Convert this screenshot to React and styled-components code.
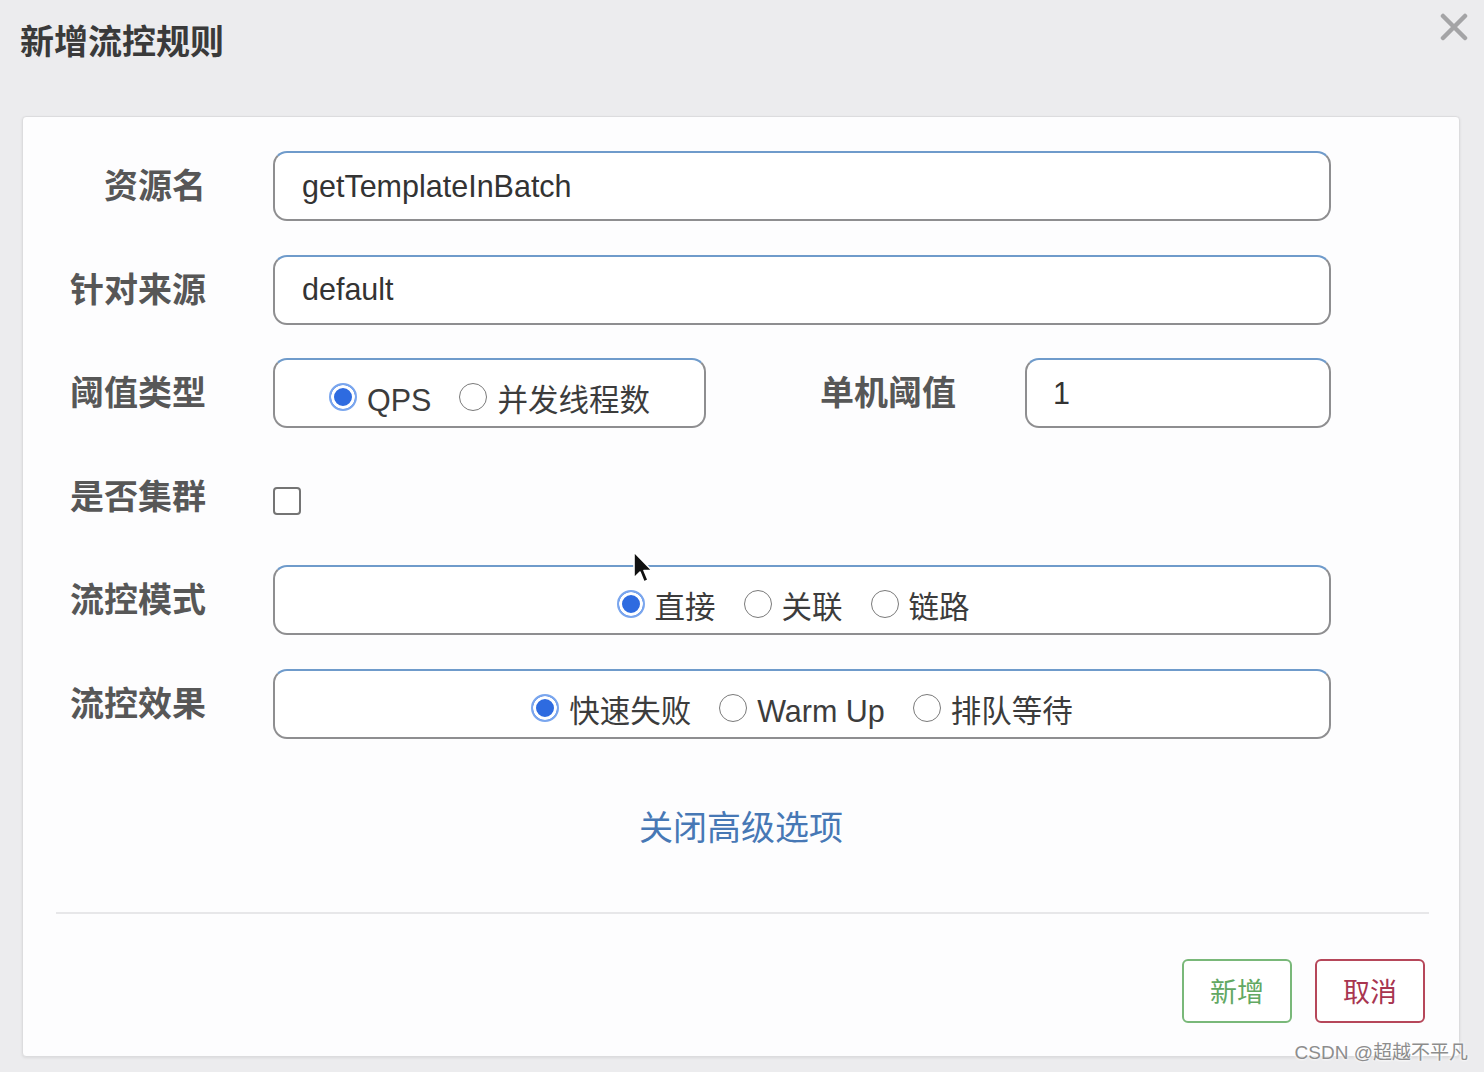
import React from "react";
import styled, { createGlobalStyle } from "styled-components";

const GlobalStyle = createGlobalStyle`
  html, body {
    margin: 0;
    padding: 0;
    background: #ececee;
  }
  * { box-sizing: border-box; }
`;

const CJK = `"Liberation Sans", "Noto Sans CJK SC", sans-serif`;

const Page = styled.div`
  position: relative;
  width: 1484px;
  height: 1072px;
  background: #ececee;
  font-family: ${CJK};
  overflow: hidden;
`;

const Header = styled.div`
  display: flex;
  justify-content: space-between;
  align-items: flex-start;
  height: 116px;
  padding: 0 15px 0 20px;
`;

const Title = styled.h1`
  margin: 22px 0 0 0;
  font-size: 34px;
  font-weight: 700;
  color: #3a3a3a;
  line-height: 40px;
`;

const Close = styled.button`
  margin-top: 12px;
  width: 30px;
  height: 30px;
  padding: 0;
  border: none;
  background: none;
  display: flex;
  align-items: center;
  justify-content: center;
`;

const Panel = styled.div`
  position: relative;
  margin: 0 24px 0 22px;
  height: 941px;
  background: #fdfdfe;
  border: 1px solid #dcdcde;
  border-radius: 4px;
  box-shadow: 0 1px 3px rgba(0, 0, 0, 0.08);
  display: flex;
  flex-direction: column;
`;

const Form = styled.div`
  display: flex;
  flex-direction: column;
  gap: 33.5px;
  padding: 34px 128px 0 0;
`;

const Row = styled.div`
  display: flex;
  align-items: center;
  height: 70px;
`;

const Label = styled.label`
  width: ${(p) => p.$width || 183}px;
  margin-left: ${(p) => p.$offset || 0}px;
  flex-shrink: 0;
  text-align: right;
  font-size: 34px;
  font-weight: 700;
  color: #575757;
  line-height: 40px;
  white-space: nowrap;
`;

const Control = styled.div`
  margin-left: ${(p) => p.$gap ?? 67}px;
  flex: ${(p) => (p.$width ? "none" : 1)};
  width: ${(p) => (p.$width ? p.$width + "px" : "auto")};
  height: 70px;
  display: flex;
  align-items: center;
`;

const Input = styled.div`
  width: 100%;
  height: 70px;
  border: 2px solid #8e8e90;
  border-top-color: #6f9bcb;
  border-radius: 14px;
  background: #fff;
  padding-left: ${(p) => p.$pad || 27}px;
  display: flex;
  align-items: center;
  font-family: "Liberation Sans", sans-serif;
  font-size: 30.5px;
  color: #333;
`;

const RadioBox = styled.div`
  width: 100%;
  height: 70px;
  border: 2px solid #8e8e90;
  border-top-color: #6f9bcb;
  border-radius: 14px;
  background: #fff;
  display: flex;
  align-items: center;
  justify-content: center;
  padding-top: 14px;
  gap: 28px;
  padding-right: ${(p) => p.$shift || 0}px;
`;

const Option = styled.span`
  display: inline-flex;
  align-items: center;
  gap: 10px;
  font-size: 30.5px;
  color: #3c3c3c;
  line-height: 36px;
`;

const Dot = styled.span`
  width: 28px;
  height: 28px;
  border-radius: 50%;
  flex-shrink: 0;
  margin-top: -6px;
  border: ${(p) => (p.$on ? "2px solid #7aa6ee" : "1.5px solid #7a7a7a")};
  background: ${(p) => (p.$on ? "#2e6be0" : "#fff")};
  box-shadow: ${(p) => (p.$on ? "inset 0 0 0 3px #fff" : "none")};
`;

const Check = styled.span`
  width: 28px;
  height: 28px;
  margin-top: 8px;
  border: 2px solid #747474;
  border-radius: 4px;
  background: #fff;
`;

const Toggle = styled.a`
  margin-top: 69px;
  align-self: center;
  font-size: 34px;
  line-height: 40px;
  color: #4778b5;
  text-decoration: none;
`;

const Divider = styled.hr`
  margin: 64px 30px 0 33px;
  border: none;
  height: 2px;
  background: #e7e7e9;
`;

const Footer = styled.div`
  display: flex;
  justify-content: flex-end;
  gap: 23px;
  padding: 45px 34px 0 0;
`;

const Button = styled.button`
  width: 110px;
  height: 64px;
  border-radius: 6px;
  background: #fff;
  font-family: ${CJK};
  font-size: 27px;
  border: 2px solid ${(p) => (p.$danger ? "#b6475a" : "#79b879")};
  color: ${(p) => (p.$danger ? "#a83550" : "#62a862")};
`;

const Cursor = styled.svg`
  position: absolute;
  left: 609px;
  top: 434px;
`;

const Watermark = styled.div`
  position: absolute;
  right: 16px;
  bottom: 8px;
  font-size: 19px;
  color: #8d8d8d;
  text-shadow: 0 0 3px #fff, 0 0 3px #fff;
`;

const Radio = ({ on, children }) => (
  <Option>
    <Dot $on={on} />
    {children}
  </Option>
);

export default function App() {
  return (
    <>
      <GlobalStyle />
      <Page>
        <Header>
          <Title>新增流控规则</Title>
          <Close aria-label="close">
            <svg width="28" height="28" viewBox="0 0 28 28">
              <path d="M3 3 L25 25 M25 3 L3 25" stroke="#a4a4a6" strokeWidth="4.5" strokeLinecap="round" />
            </svg>
          </Close>
        </Header>
        <Panel>
          <Form>
            <Row>
              <Label>资源名</Label>
              <Control>
                <Input>getTemplateInBatch</Input>
              </Control>
            </Row>
            <Row>
              <Label>针对来源</Label>
              <Control>
                <Input>default</Input>
              </Control>
            </Row>
            <Row>
              <Label>阈值类型</Label>
              <Control $width={433}>
                <RadioBox>
                  <Radio on>QPS</Radio>
                  <Radio>并发线程数</Radio>
                </RadioBox>
              </Control>
              <Label $width={136} $offset={114}>单机阈值</Label>
              <Control $gap={69}>
                <Input $pad={26}>1</Input>
              </Control>
            </Row>
            <Row>
              <Label>是否集群</Label>
              <Control>
                <Check />
              </Control>
            </Row>
            <Row>
              <Label>流控模式</Label>
              <Control>
                <RadioBox $shift={18}>
                  <Radio on>直接</Radio>
                  <Radio>关联</Radio>
                  <Radio>链路</Radio>
                </RadioBox>
              </Control>
            </Row>
            <Row>
              <Label>流控效果</Label>
              <Control>
                <RadioBox>
                  <Radio on>快速失败</Radio>
                  <Radio>Warm Up</Radio>
                  <Radio>排队等待</Radio>
                </RadioBox>
              </Control>
            </Row>
          </Form>
          <Toggle>关闭高级选项</Toggle>
          <Divider />
          <Footer>
            <Button>新增</Button>
            <Button $danger>取消</Button>
          </Footer>
          <Cursor width="24" height="36" viewBox="0 0 24 36">
            <path d="M2 1 L2 27 L8 21 L12 31 L16 29 L12 19.5 L20 19.5 Z" fill="#111" stroke="#fff" strokeWidth="1.6" strokeLinejoin="round" />
          </Cursor>
        </Panel>
        <Watermark>CSDN @超越不平凡</Watermark>
      </Page>
    </>
  );
}
